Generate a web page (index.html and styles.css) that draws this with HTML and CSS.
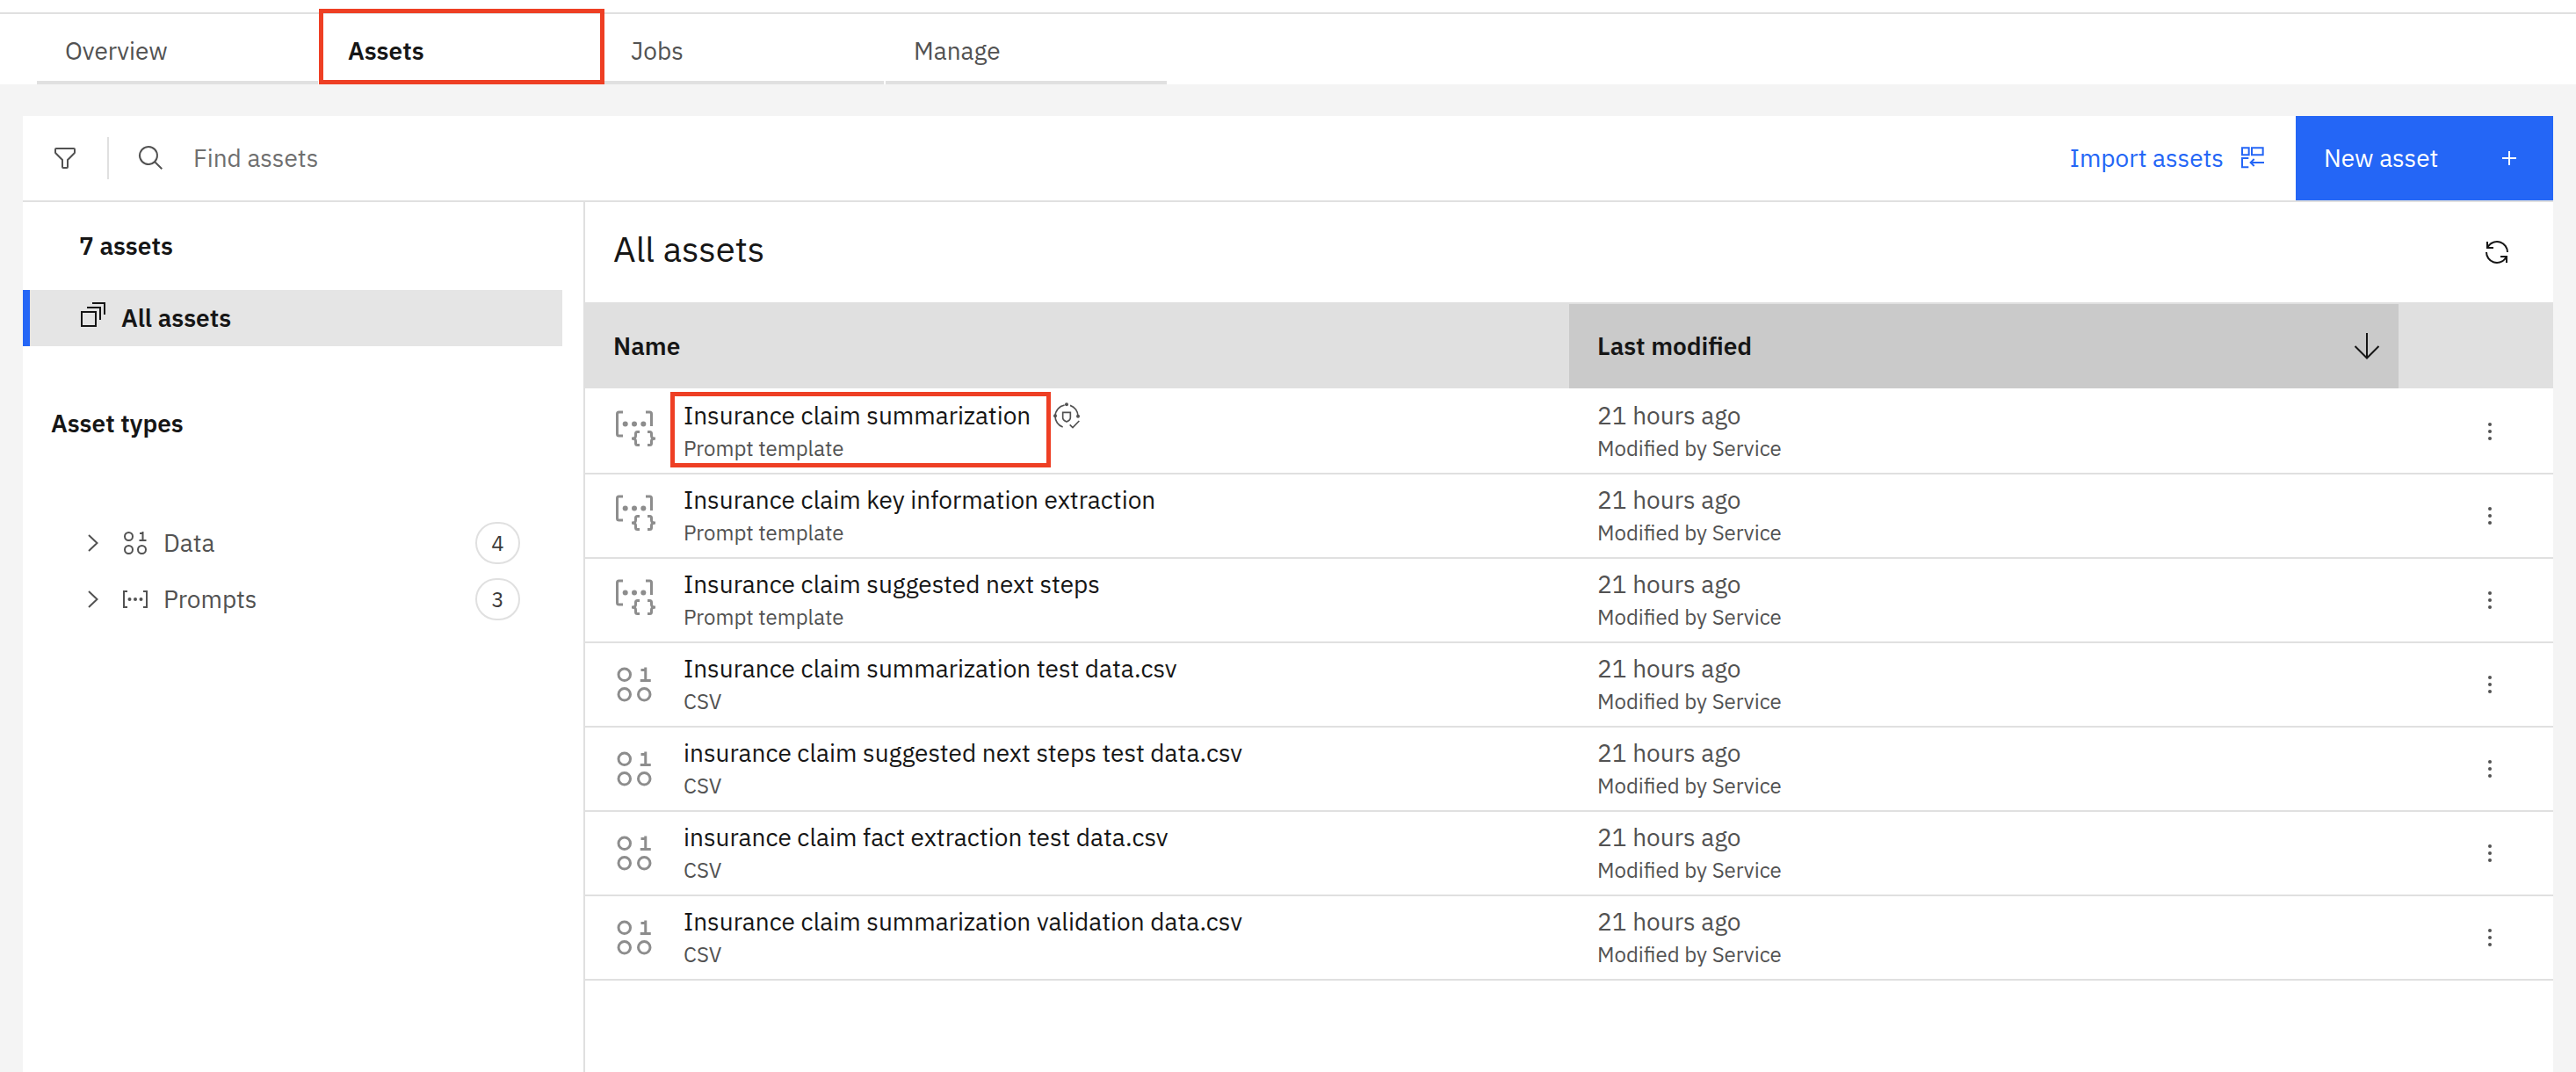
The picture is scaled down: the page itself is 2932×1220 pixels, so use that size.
FILE: index.html
```
<!DOCTYPE html>
<html lang="en">
<head>
<meta charset="utf-8">
<title>Project assets</title>
<link rel="stylesheet" href="styles.css">
</head>
<body>
<svg class="sprite" aria-hidden="true">
  <symbol id="i-prompt-template" viewBox="0 0 48 48">
    <g fill="none" stroke="currentColor" stroke-width="3">
      <path d="M11 2H6.500Q4.500 2 4.500 4V27Q4.500 29 6.500 29H11"/>
      <path d="M37 2H41.500Q43.500 2 43.500 4V18"/>
      <path d="M30 24.500H27.500Q25.500 24.500 25.500 26.500V29Q25.500 32 21 32Q25.500 32 25.500 35V37.500Q25.500 39.500 27.500 39.500H30"/>
      <path d="M39 24.500H41.500Q43.500 24.500 43.500 26.500V29Q43.500 32 48 32Q43.500 32 43.500 35V37.500Q43.500 39.500 41.500 39.500H39"/>
    </g>
    <g fill="currentColor"><circle cx="13.700" cy="15.500" r="3"/><circle cx="24" cy="15.500" r="3"/><circle cx="34.300" cy="15.500" r="3"/></g>
  </symbol>
  <symbol id="i-data" viewBox="0 0 32 32">
    <g fill="none" stroke="currentColor" stroke-width="2">
      <rect x="4" y="4" width="9" height="9" rx="4.500"/>
      <rect x="4" y="19" width="9" height="9" rx="4.500"/>
      <rect x="19" y="19" width="9" height="9" rx="4.500"/>
      <path d="M21 5H24.500M24.500 3V13M20.500 13H28.500"/>
    </g>
  </symbol>
  <symbol id="i-prompt" viewBox="0 0 32 32">
    <path d="M7 7H3V25H7M25 7H29V25H25" fill="none" stroke="currentColor" stroke-width="2"/>
    <g fill="currentColor"><circle cx="9.500" cy="16" r="2"/><circle cx="16" cy="16" r="2"/><circle cx="22.500" cy="16" r="2"/></g>
  </symbol>
  <symbol id="i-chevron" viewBox="0 0 32 32">
    <path d="M11 7L20.500 16L11 25" fill="none" stroke="currentColor" stroke-width="2"/>
  </symbol>
  <symbol id="i-overflow" viewBox="0 0 32 32">
    <g fill="currentColor"><circle cx="16" cy="8" r="2"/><circle cx="16" cy="16" r="2"/><circle cx="16" cy="24" r="2"/></g>
  </symbol>
</svg>

<header class="top">
  <nav class="tabs" aria-label="Project">
    <a class="tab" href="#overview">Overview</a>
    <a class="tab tab-selected" href="#assets" aria-current="page">Assets<span class="callout callout-tab"></span></a>
    <a class="tab" href="#jobs">Jobs</a>
    <a class="tab" href="#manage">Manage</a>
  </nav>
</header>

<main class="panel">
  <div class="toolbar">
    <button class="filter" type="button" aria-label="Filter">
      <svg class="icon" viewBox="0 0 32 32"><path d="M18 28H14a2 2 0 0 1-2-2V18.410L4.590 11A2 2 0 0 1 4 9.590V6A2 2 0 0 1 6 4H26a2 2 0 0 1 2 2V9.590A2 2 0 0 1 27.410 11L20 18.410V26A2 2 0 0 1 18 28ZM6 6V9.590l8 8V26h4V17.590l8-8V6Z" fill="currentColor"/></svg>
    </button>
    <label class="search">
      <svg class="icon" viewBox="0 0 32 32"><path d="M29 27.586l-7.552-7.552a11.018 11.018 0 1 0-1.414 1.414L27.586 29ZM4 13a9 9 0 1 1 9 9 9.010 9.010 0 0 1-9-9Z" fill="currentColor"/></svg>
      <input class="search-input" type="text" placeholder="Find assets" aria-label="Find assets">
    </label>
    <button class="import" type="button">Import assets
      <svg class="icon" viewBox="0 0 96 96"><path d="M9 13H32V37H9ZM42 13H80V37H42ZM31 48H9V79H31M84 63H38M50 51L38 63L50 75" fill="none" stroke="currentColor" stroke-width="6"/></svg>
    </button>
    <button class="new" type="button">New asset
      <svg class="icon" viewBox="0 0 32 32"><path d="M16 8V24M8 16H24" stroke="currentColor" stroke-width="2"/></svg>
    </button>
  </div>

  <div class="content">
    <aside class="side">
      <h2 class="count">7 assets</h2>
      <a class="all" href="#all" aria-current="true">
        <svg class="icon" viewBox="0 4 32 32"><path d="M3 13H19V29H3ZM9 8H24V22M15 3H29V16" fill="none" stroke="currentColor" stroke-width="2"/></svg>
        All assets
      </a>
      <h2 class="types">Asset types</h2>
      <button class="type" type="button" aria-expanded="false">
        <svg class="icon"><use href="#i-chevron"/></svg>
        <svg class="icon"><use href="#i-data"/></svg>
        <span class="type-name">Data</span><span class="badge">4</span>
      </button>
      <button class="type" type="button" aria-expanded="false">
        <svg class="icon"><use href="#i-chevron"/></svg>
        <svg class="icon"><use href="#i-prompt"/></svg>
        <span class="type-name">Prompts</span><span class="badge">3</span>
      </button>
    </aside>

    <section class="list">
      <div class="list-head">
        <h1 class="list-title">All assets</h1>
        <button class="refresh" type="button" aria-label="Refresh">
          <svg class="icon" viewBox="0 0 32 32"><path d="M12 10H6.780A11 11 0 0 1 27 16h2A13 13 0 0 0 6 7.680V4H4v8h8ZM20 22h5.220A11 11 0 0 1 5 16H3a13 13 0 0 0 23 8.320V28h2V20H20Z" fill="currentColor"/></svg>
        </button>
      </div>
      <table class="assets">
        <thead>
          <tr>
            <th class="col-name" scope="col">Name</th>
            <th class="col-modified" scope="col" aria-sort="descending">
              <button class="sort" type="button">Last modified
                <svg class="icon" viewBox="0 0 32 32"><path d="M16 1V29M2.500 16L16 29.500L29.500 16" fill="none" stroke="currentColor" stroke-width="2"/></svg>
              </button>
            </th>
            <th class="col-actions" aria-label="Actions"></th>
          </tr>
        </thead>
        <tbody>
          <tr>
            <td><div class="asset">
              <svg class="asset-icon"><use href="#i-prompt-template"/></svg>
              <div class="asset-text">
                <div class="asset-line"><a class="asset-name" href="#a1">Insurance claim summarization</a>
                  <svg class="governed" viewBox="0 0 90 90" role="img" aria-label="Tracked">
                    <path d="M6 47A39 39 0 0 1 38 9M6 47A39 39 0 0 0 32 84M57 10A39 39 0 0 1 84 47M56 76L66 86L88 63M32 34H58V52Q58 61 45 66Q32 61 32 52Z" fill="none" stroke="currentColor" stroke-width="5"/>
                    <g fill="currentColor"><circle cx="45" cy="7" r="6"/><circle cx="6" cy="46" r="6"/><circle cx="84" cy="47" r="6"/></g>
                  </svg>
                </div>
                <div class="sub">Prompt template</div>
              </div>
              <span class="callout callout-row"></span>
            </div></td>
            <td class="modified">21 hours ago<div class="sub">Modified by Service</div></td>
            <td class="actions"><button class="more" type="button" aria-label="Options"><svg class="icon"><use href="#i-overflow"/></svg></button></td>
          </tr>
          <tr>
            <td><div class="asset">
              <svg class="asset-icon"><use href="#i-prompt-template"/></svg>
              <div class="asset-text"><div class="asset-line"><a class="asset-name" href="#a2">Insurance claim key information extraction</a></div><div class="sub">Prompt template</div></div>
            </div></td>
            <td class="modified">21 hours ago<div class="sub">Modified by Service</div></td>
            <td class="actions"><button class="more" type="button" aria-label="Options"><svg class="icon"><use href="#i-overflow"/></svg></button></td>
          </tr>
          <tr>
            <td><div class="asset">
              <svg class="asset-icon"><use href="#i-prompt-template"/></svg>
              <div class="asset-text"><div class="asset-line"><a class="asset-name" href="#a3">Insurance claim suggested next steps</a></div><div class="sub">Prompt template</div></div>
            </div></td>
            <td class="modified">21 hours ago<div class="sub">Modified by Service</div></td>
            <td class="actions"><button class="more" type="button" aria-label="Options"><svg class="icon"><use href="#i-overflow"/></svg></button></td>
          </tr>
          <tr>
            <td><div class="asset">
              <svg class="asset-icon"><use href="#i-data"/></svg>
              <div class="asset-text"><div class="asset-line"><a class="asset-name" href="#a4">Insurance claim summarization test data.csv</a></div><div class="sub">CSV</div></div>
            </div></td>
            <td class="modified">21 hours ago<div class="sub">Modified by Service</div></td>
            <td class="actions"><button class="more" type="button" aria-label="Options"><svg class="icon"><use href="#i-overflow"/></svg></button></td>
          </tr>
          <tr>
            <td><div class="asset">
              <svg class="asset-icon"><use href="#i-data"/></svg>
              <div class="asset-text"><div class="asset-line"><a class="asset-name" href="#a5">insurance claim suggested next steps test data.csv</a></div><div class="sub">CSV</div></div>
            </div></td>
            <td class="modified">21 hours ago<div class="sub">Modified by Service</div></td>
            <td class="actions"><button class="more" type="button" aria-label="Options"><svg class="icon"><use href="#i-overflow"/></svg></button></td>
          </tr>
          <tr>
            <td><div class="asset">
              <svg class="asset-icon"><use href="#i-data"/></svg>
              <div class="asset-text"><div class="asset-line"><a class="asset-name" href="#a6">insurance claim fact extraction test data.csv</a></div><div class="sub">CSV</div></div>
            </div></td>
            <td class="modified">21 hours ago<div class="sub">Modified by Service</div></td>
            <td class="actions"><button class="more" type="button" aria-label="Options"><svg class="icon"><use href="#i-overflow"/></svg></button></td>
          </tr>
          <tr>
            <td><div class="asset">
              <svg class="asset-icon"><use href="#i-data"/></svg>
              <div class="asset-text"><div class="asset-line"><a class="asset-name" href="#a7">Insurance claim summarization validation data.csv</a></div><div class="sub">CSV</div></div>
            </div></td>
            <td class="modified">21 hours ago<div class="sub">Modified by Service</div></td>
            <td class="actions"><button class="more" type="button" aria-label="Options"><svg class="icon"><use href="#i-overflow"/></svg></button></td>
          </tr>
        </tbody>
      </table>
    </section>
  </div>
</main>
</body>
</html>
```
FILE: styles.css
```
:root {
  --text: #161616;
  --text-soft: #525252;
  --line: #e0e0e0;
  --blue: #2466f6;
  --callout: #ee3f24;
}

* { box-sizing: border-box; }

body {
  display: flex;
  flex-direction: column;
  min-height: 100vh;
  margin: 0;
  background: #f4f4f4;
  color: var(--text);
  font: 400 28px/36px "IBM Plex Sans", Roboto, "Liberation Sans", sans-serif;
}

h1, h2 { margin: 0; font-size: inherit; }
a { color: inherit; text-decoration: none; }

button {
  padding: 0;
  border: 0;
  background: none;
  color: inherit;
  font: inherit;
  text-align: left;
  cursor: pointer;
}

.sprite { display: none; }
.icon { display: block; flex: none; width: 32px; height: 32px; overflow: visible; }

/* Tabs */
.top { padding-top: 14px; background: #fff; }
.tabs {
  display: flex;
  gap: 2px;
  padding-left: 42px;
  border-top: 2px solid var(--line);
}
.tab {
  position: relative;
  width: 320px;
  padding: 24px 32px 16px;
  border-bottom: 4px solid var(--line);
  color: var(--text-soft);
}
.tab-selected {
  border-bottom-color: var(--blue);
  color: var(--text);
  font-weight: 600;
}

/* Red outlines drawn over the page */
.callout {
  position: absolute;
  z-index: 1;
  border: 5px solid var(--callout);
  pointer-events: none;
}
.callout-tab { inset: -6px -4px -4px -1px; }
.callout-row { top: -8px; bottom: -4px; left: 65px; width: 433px; }

/* Panel and toolbar */
.panel {
  display: flex;
  flex: 1;
  flex-direction: column;
  margin: 36px 26px 0;
  background: #fff;
}
.toolbar {
  display: flex;
  align-items: center;
  height: 98px;
  border-bottom: 2px solid var(--line);
}
.filter {
  display: flex;
  justify-content: center;
  align-items: center;
  width: 98px;
  height: 48px;
  border-right: 2px solid var(--line);
  color: var(--text-soft);
}
.search {
  display: flex;
  flex: 1;
  align-items: center;
  gap: 32px;
  padding-left: 32px;
  color: var(--text-soft);
}
.search-input {
  flex: 1;
  min-width: 0;
  padding: 0;
  border: 0;
  outline: 0;
  background: none;
  color: var(--text);
  font: inherit;
}
.search-input::placeholder { color: #6f6f6f; opacity: 1; }
.import {
  display: flex;
  align-items: center;
  gap: 18px;
  height: 100%;
  padding: 0 32px;
  color: var(--blue);
}
.new {
  display: flex;
  justify-content: space-between;
  align-items: center;
  width: 293px;
  height: 100%;
  padding: 0 34px 0 32px;
  background: var(--blue);
  color: #fff;
}

.content { display: flex; flex: 1; }

/* Asset type navigation */
.side {
  flex: none;
  width: 640px;
  padding-top: 32px;
  border-right: 2px solid var(--line);
}
.count { margin-bottom: 32px; padding-left: 64px; font-weight: 600; }
.all {
  display: flex;
  align-items: center;
  gap: 16px;
  height: 64px;
  margin-right: 24px;
  padding-left: 56px;
  border-left: 8px solid var(--blue);
  background: #e5e5e5;
  font-weight: 600;
}
.types { margin: 70px 0 86px; padding-left: 32px; font-weight: 600; }
.type {
  display: flex;
  align-items: center;
  gap: 16px;
  width: 100%;
  height: 64px;
  padding: 0 72px 0 64px;
  color: var(--text-soft);
}
.type-name { flex: 1; }
.badge {
  width: 51px;
  height: 48px;
  border: 2px solid var(--line);
  border-radius: 24px;
  color: #393939;
  font-size: 24px;
  line-height: 44px;
  text-align: center;
}

/* Asset table */
.list { flex: 1; min-width: 0; }
.list-head {
  display: flex;
  justify-content: space-between;
  align-items: center;
  height: 114px;
  padding: 0 48px 0 32px;
}
.list-title { padding-bottom: 8px; font-size: 40px; font-weight: 400; line-height: 48px; }
.assets {
  width: 100%;
  border-collapse: separate;
  border-spacing: 0;
  border-top: 2px solid var(--line);
  table-layout: fixed;
}
th {
  height: 98px;
  padding: 0 32px;
  border-bottom: 2px solid #fff;
  background: var(--line);
  background-clip: padding-box;
  font-weight: 600;
  text-align: left;
}
th.col-modified { padding-right: 20px; background-color: #cacaca; }
.col-name { width: 50%; }
.col-actions { width: 176px; }
.sort {
  display: flex;
  justify-content: space-between;
  align-items: center;
  width: 100%;
}
td {
  height: 96px;
  padding: 0 32px;
  border-bottom: 2px solid var(--line);
  color: var(--text-soft);
}
.asset { position: relative; display: flex; align-items: center; gap: 32px; }
.asset-icon { flex: none; width: 48px; height: 48px; color: #8d8d8d; }
.asset-line { display: flex; align-items: center; gap: 26px; height: 38px; }
.asset-name { color: var(--text); }
.governed { width: 30px; height: 30px; overflow: visible; }
.modified { line-height: 38px; }
.sub { font-size: 24px; line-height: 36px; }
.more { display: block; margin-left: auto; }
td.actions { padding-right: 56px; }
```
